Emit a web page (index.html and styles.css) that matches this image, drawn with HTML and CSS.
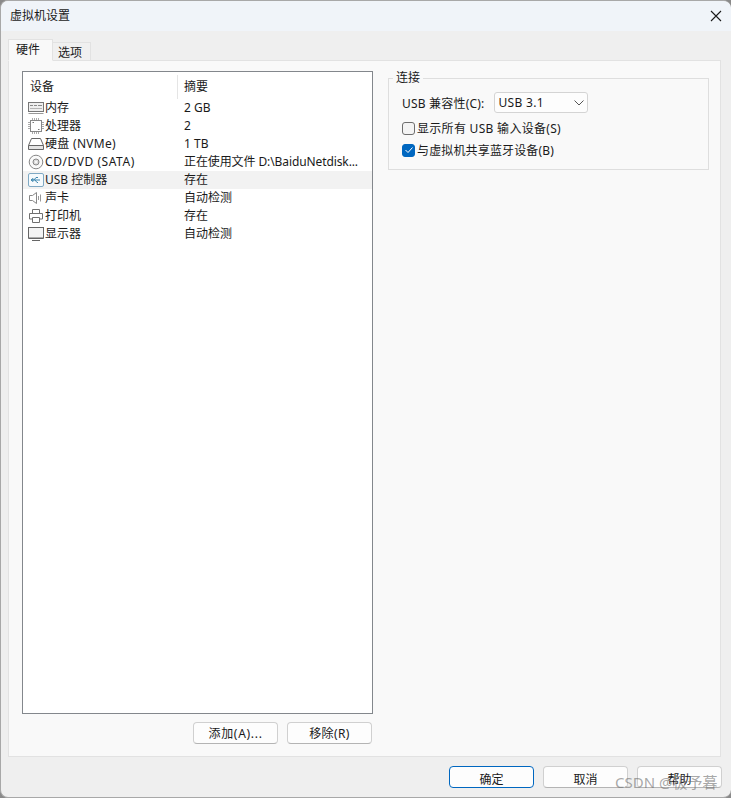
FILE: index.html
```html
<!DOCTYPE html>
<html lang="zh-CN">
<head>
<meta charset="utf-8">
<title>虚拟机设置</title>
<link rel="stylesheet" href="styles.css">
</head>
<body>
<div class="window">
  <header class="titlebar">
    <span class="title">虚拟机设置</span>
    <svg class="close" width="12" height="12" viewBox="0 0 12 12"><path d="M1 1L11 11M11 1L1 11" stroke="#1a1a1a" stroke-width="1.1" fill="none"/></svg>
  </header>
  <div class="content">
    <div class="tabs">
      <div class="tab active">硬件</div>
      <div class="tab">选项</div>
    </div>
    <div class="panel">
      <div class="left">
        <div class="list">
          <div class="row head"><div class="c1 plain">设备</div><div class="c2">摘要</div></div>
          <div class="row"><div class="c1">
            <svg class="ico" viewBox="0 0 18 16"><rect x="1.500" y="2.500" width="15" height="9" fill="#efefef" stroke="#777"/><path d="M3 5.500h3M7 5.500h3M11 5.500h4" stroke="#8a8a8a"/><path d="M3 8.500h12" stroke="#b5b5b5"/><path d="M1.500 13.500h15" stroke="#999"/></svg>内存</div><div class="c2">2 GB</div></div>
          <div class="row"><div class="c1">
            <svg class="ico" viewBox="0 0 18 16"><rect x="3.500" y="2.500" width="11" height="11" fill="#fff" stroke="#888"/><path d="M1 4.500h2M1 6.500h2M1 8.500h2M1 10.500h2M15 4.500h2M15 6.500h2M15 8.500h2M15 10.500h2M5.500 0v2M7.500 0v2M9.500 0v2M11.500 0v2M5.500 14v2M7.500 14v2M9.500 14v2M11.500 14v2" stroke="#aaa"/><path d="M5.500 4.500h1.500M11 11.500h1.500" stroke="#777"/></svg>处理器</div><div class="c2">2</div></div>
          <div class="row"><div class="c1">
            <svg class="ico" viewBox="0 0 18 14"><path d="M4.500 1.500h9L16.500 8.500v4h-15v-4zM1.500 8.500h15" fill="#fff" stroke="#666"/><path d="M2 9h14v3H2z" fill="#e4e4e4"/></svg><span class="cap-a">硬盘 (NVMe)</span></div><div class="c2">1 TB</div></div>
          <div class="row"><div class="c1">
            <svg class="ico" viewBox="0 0 18 16"><circle cx="9" cy="8" r="6.800" fill="#fafafa" stroke="#888"/><circle cx="9" cy="8" r="3" fill="#ddd" stroke="#888"/><circle cx="9" cy="8" r="1" fill="#fff"/></svg><span class="wide">CD/DVD (SATA)</span></div><div class="c2 tight">正在使用文件 D:\BaiduNetdisk...</div></div>
          <div class="row selected"><div class="c1">
            <svg class="ico" viewBox="0 0 18 16"><rect x="1.500" y="1.500" width="15" height="13" rx="1.500" fill="#f5fafd" stroke="#7fa9c4"/><path d="M4 8h9M4 8l2-1.500v3zM7 8l2-2.500h2M8 8l2 2.500h1" fill="none" stroke="#3f87b0"/></svg>USB 控制器</div><div class="c2">存在</div></div>
          <div class="row"><div class="c1">
            <svg class="ico" viewBox="0 0 18 16"><path d="M2.500 5.500h3L9.500 2.500v11l-4-3h-3z" fill="#fff" stroke="#888"/><path d="M11.500 6v4M13.500 4.500v7" stroke="#999" fill="none"/></svg>声卡</div><div class="c2">自动检测</div></div>
          <div class="row"><div class="c1">
            <svg class="ico" viewBox="0 0 18 16"><path d="M5.500 5V1.500h7V5M5.500 11H2.500V5.500h13V11h-3M5.500 9.500h7v5h-7z" fill="#fff" stroke="#707070"/></svg>打印机</div><div class="c2">存在</div></div>
          <div class="row"><div class="c1">
            <svg class="ico" viewBox="0 0 18 16"><rect x="1.500" y="1.500" width="15" height="10.500" fill="#f4f4f4" stroke="#666"/><path d="M5 14.500h8M1.500 12.500h15" stroke="#666"/></svg>显示器</div><div class="c2">自动检测</div></div>
        </div>
        <div class="list-actions">
          <button class="btn spaced">添加(A)...</button>
          <button class="btn spaced-sm">移除(R)</button>
        </div>
      </div>
      <div class="right">
        <fieldset class="group">
          <legend>连接</legend>
          <div class="field">
            <span class="label">USB 兼容性(C):</span>
            <div class="select"><span class="cap-a">USB 3.1</span><svg width="10" height="6" viewBox="0 0 10 6"><path d="M0.500 0.500L5 5L9.500 0.500" stroke="#555" fill="none"/></svg></div>
          </div>
          <label class="check first"><span class="box"></span><span class="cap-a">显示所有 USB 输入设备(S)</span></label>
          <label class="check"><span class="box on"><svg width="10" height="8" viewBox="0 0 10 8"><path d="M1.500 4L4 6.500L8.500 1.500" stroke="#fff" fill="none"/></svg></span><span class="cap-b">与虚拟机共享蓝牙设备(B)</span></label>
        </fieldset>
      </div>
    </div>
    <footer class="footer">
      <button class="btn primary">确定</button>
      <button class="btn">取消</button>
      <button class="btn">帮助</button>
    </footer>
  </div>
  <div class="watermark">CSDN @极予暮</div>
</div>
</body>
</html>
```

FILE: styles.css
```css
* { box-sizing: border-box; }
html, body { margin: 0; height: 100%; }
body {
  background: #8a8a8a;
  font-family: "Noto Sans", "Noto Sans CJK SC", sans-serif;
  font-size: 12px;
  color: #1a1a1a;
  overflow: hidden;
}
.window {
  position: relative;
  width: 731px;
  height: 798px;
  background: #efefef;
  border: 1px solid #a8a8a8;
  border-right: 0;
  border-radius: 8px;
  overflow: hidden;
  display: flex;
  flex-direction: column;
}
.titlebar {
  height: 30px;
  flex: none;
  background: #f0f4f9;
  display: flex;
  align-items: center;
  justify-content: space-between;
  padding: 0 9px;
}
.title { font-size: 12px; line-height: 28px; }
.close { display: block; }
.content {
  flex: 1;
  display: flex;
  flex-direction: column;
  padding: 8px 10px 0 7px;
}
.tabs {
  display: flex;
  align-items: flex-end;
  height: 22px;
  flex: none;
  margin-bottom: -1px;
  position: relative;
}
.tab {
  width: 38px;
  height: 19px;
  background: #f0f0f0;
  border: 1px solid #e2e2e2;
  border-left: 0;
  padding-left: 5px;
  line-height: 20px;
}
.tab.active {
  width: 45px;
  height: 22px;
  background: #f9f9f9;
  border: 1px solid #e2e2e2;
  border-bottom: 1px solid #f9f9f9;
  padding-left: 7px;
  line-height: 20px;
  position: relative;
}
.panel {
  height: 697px;
  flex: none;
  background: #f9f9f9;
  border: 1px solid #e2e2e2;
  display: flex;
  padding: 10px 11px 0 13px;
  gap: 15px;
}
.left { width: 351px; flex: none; display: flex; flex-direction: column; }
.list {
  height: 643px;
  flex: none;
  background: #fff;
  border: 1px solid #83878c;
}
.row { display: flex; height: 18px; align-items: center; white-space: nowrap; line-height: 18px; }
.row.head { height: 27px; padding-top: 3px; align-items: stretch; line-height: 24px; }
.row.head .c1 { border-right: 1px solid #e5e5e5; }
.row.selected { background: #f2f2f2; }
.c1 { width: 155px; flex: none; padding-left: 4px; display: flex; align-items: center; }
.c1.plain { padding-left: 7px; }
.c2 { padding-left: 6px; flex: 1; }
.tight { letter-spacing: -0.1px; }
.wide { letter-spacing: 0.55px; }
.ico { width: 18px; height: 16px; flex: none; display: block; }
.list-actions { display: flex; justify-content: flex-end; gap: 9px; margin-top: 8px; padding-right: 1px; }
.btn {
  width: 85px;
  height: 22px;
  background: #fdfdfd;
  border: 1px solid #d0d0d0;
  border-bottom-color: #b4b4b4;
  border-radius: 4px;
  font: inherit;
  color: inherit;
  padding: 2px 0 0;
  line-height: 18px;
}
.spaced { letter-spacing: 0.7px; }
.spaced-sm { letter-spacing: 0.4px; }
.btn.primary { border: 1px solid #0067c0; }
.right { flex: 1; }
.group {
  margin: 0;
  width: 321px;
  height: 99px;
  padding: 7px 0 0 13px;
  border: 1px solid #dedede;
}
.group legend { padding: 0 3px; margin-left: -9px; line-height: 14px; }
.field { display: flex; align-items: center; gap: 10px; height: 21px; }
.label { letter-spacing: 0.2px; }
.select {
  width: 94px;
  height: 21px;
  background: #fdfdfd;
  border: 1px solid #d4d4d4;
  border-radius: 3px;
  display: flex;
  align-items: center;
  justify-content: space-between;
  padding: 0 3px;
}
.check { display: flex; align-items: center; height: 22px; }
.check.first { margin-top: 4px; }
.cap-a { letter-spacing: 0.3px; }
.cap-b { letter-spacing: 0.15px; }
.box {
  width: 13px;
  height: 13px;
  border: 1px solid #6e6e6e;
  border-radius: 3px;
  background: #f4f4f4;
  margin-right: 2px;
  display: flex;
  align-items: center;
  justify-content: center;
}
.box.on { background: #0067c0; border-color: #0067c0; }
.footer {
  display: flex;
  justify-content: flex-end;
  gap: 9px;
  padding-top: 9px;
  margin-right: -1px;
}
.footer .btn { padding-top: 4px; }
.watermark {
  position: absolute;
  left: 614px;
  top: 772px;
  font-size: 15px;
  line-height: 18px;
  color: rgba(110,110,110,0.6);
  white-space: nowrap;
}
```
